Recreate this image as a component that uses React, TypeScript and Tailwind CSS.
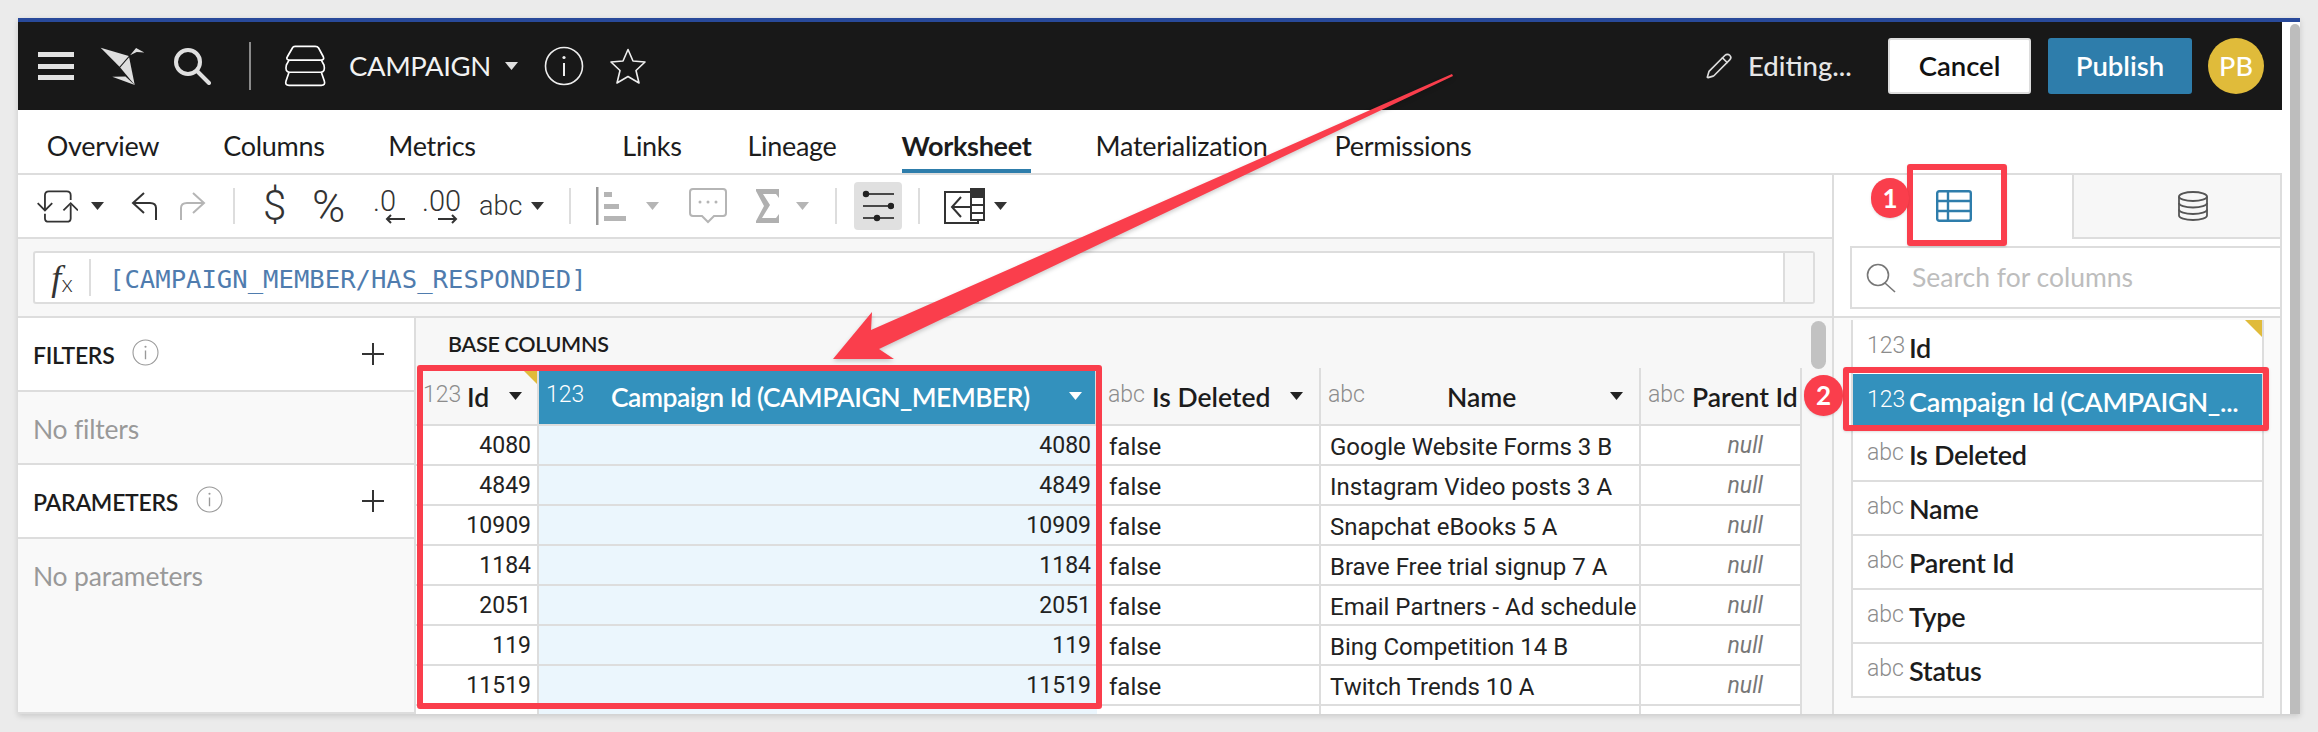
import { Pencil } from 'lucide-react';

const rows = [
  { id: '4080', name: 'Google Website Forms 3 B' },
  { id: '4849', name: 'Instagram Video posts 3 A' },
  { id: '10909', name: 'Snapchat eBooks 5 A' },
  { id: '1184', name: 'Brave Free trial signup 7 A' },
  { id: '2051', name: 'Email Partners - Ad schedule' },
  { id: '119', name: 'Bing Competition 14 B' },
  { id: '11519', name: 'Twitch Trends 10 A' },
  { id: '', name: '' },
];

const tabs = [
  { label: 'Overview', cls: 'ml-[30px] w-[110px]' },
  { label: 'Columns', cls: 'ml-[64px] w-[104px]' },
  { label: 'Metrics', cls: 'ml-[64px] w-[84px]' },
  { label: 'Links', cls: 'ml-[148px] w-[60px]' },
  { label: 'Lineage', cls: 'ml-[65px] w-[90px]' },
  { label: 'Worksheet', cls: 'ml-[65px] w-[129px]', active: true },
  { label: 'Materialization', cls: 'ml-[65px] w-[171px]' },
  { label: 'Permissions', cls: 'ml-[66px] w-[140px]' },
];

const columnList = [
  { type: '123', label: 'Id', cls: 'h-[54px]' },
  { type: '123', label: 'Campaign Id (CAMPAIGN_...', cls: 'h-[54px] bg-[#3391bd] text-white', selected: true },
  { type: 'abc', label: 'Is Deleted', cls: 'h-[54px] border-b-2 border-[#ddd]' },
  { type: 'abc', label: 'Name', cls: 'h-[54px] border-b-2 border-[#ddd]' },
  { type: 'abc', label: 'Parent Id', cls: 'h-[54px] border-b-2 border-[#ddd]' },
  { type: 'abc', label: 'Type', cls: 'h-[54px] border-b-2 border-[#ddd]' },
  { type: 'abc', label: 'Status', cls: 'h-[54px] border-b-2 border-[#ddd]' },
];

function Caret({ className }: { className: string }) {
  return (
    <svg viewBox="0 0 13 8" className={`h-[8px] w-[13px] shrink-0 ${className}`} fill="currentColor">
      <polygon points="0,0 13,0 6.5,8" />
    </svg>
  );
}

function Divider({ className }: { className: string }) {
  return <div className={`h-[36px] w-[2px] shrink-0 bg-[#ddd] ${className}`} />;
}

function Logo() {
  return (
    <svg viewBox="205 30 145 125" className="ml-[24px] h-[42px] w-[48px]" fill="#dedede">
      <polygon points="213,37 298,62 270,95" />
      <polygon points="302,60 320,38 345,52 322,50" />
      <polygon points="299,66 272,97 316,150" />
      <polygon points="248,125 288,124 316,150" />
    </svg>
  );
}

function StackIcon() {
  return (
    <svg viewBox="765 25 125 125" className="ml-[33px] h-[42px] w-[42px]" fill="none" stroke="#fff" strokeWidth="5">
      <path d="M780 70 Q770 68 775 60 L790 34 Q792 29 798 29 H858 Q865 29 868 34 L882 60 Q886 68 876 70 Z" />
      <path d="M780 70 L772 85 Q767 106 782 106 H874 Q889 106 884 85 L876 70" />
      <path d="M780 106 L771 132 Q767 145 780 145 H876 Q889 145 885 132 L876 106" />
    </svg>
  );
}

function InfoIcon({ className, color }: { className: string; color: string }) {
  return (
    <svg viewBox="0 0 40 40" className={className} fill="none" stroke={color}>
      <circle cx="20" cy="20" r="18.5" strokeWidth="1.6" />
      <line x1="20" y1="17" x2="20" y2="30" strokeWidth="2" />
      <circle cx="20" cy="11.5" r="1.6" fill={color} stroke="none" />
    </svg>
  );
}

function TopBar() {
  return (
    <div className="flex h-[88px] items-center bg-[#181818] text-white">
      <div className="ml-[20px] flex h-[28px] w-[36px] flex-col justify-between">
        <div className="h-[5px] bg-[#e2e2e2]" />
        <div className="h-[5px] bg-[#e2e2e2]" />
        <div className="h-[5px] bg-[#e2e2e2]" />
      </div>
      <Logo />
      <svg viewBox="0 0 38 38" className="ml-[27px] h-[38px] w-[38px]" fill="none" stroke="#e0e0e0" strokeWidth="4" strokeLinecap="round">
        <circle cx="15" cy="15" r="12" />
        <line x1="24" y1="24" x2="36" y2="36" />
      </svg>
      <div className="ml-[38px] h-[48px] w-[2px] bg-[#8a8a8a]" />
      <StackIcon />
      <span className="ml-[23px] w-[139px] whitespace-nowrap font-['Lato',sans-serif] text-[27.5px] leading-none tracking-[-0.4px] text-[#f2f2f2]">CAMPAIGN</span>
      <Caret className="ml-[17px] text-[#e0e0e0]" />
      <InfoIcon className="ml-[26px] h-[40px] w-[40px]" color="#eee" />
      <svg viewBox="0 0 36 36" className="ml-[26px] h-[36px] w-[36px]" fill="none" stroke="#eee" strokeWidth="1.6" strokeLinejoin="round">
        <polygon points="18,1.5 23,13 35,14 26,22.5 29,35 18,28.5 7,35 10,22.5 1,14 13,13" />
      </svg>
      <Pencil className="ml-auto text-[#ddd]" size={28} strokeWidth={1.4} />
      <span className="ml-[15px] w-[107px] whitespace-nowrap font-['Lato',sans-serif] text-[27.5px] font-medium text-[#e6e6e6]">Editing...</span>
      <button className="ml-[33px] h-[56px] w-[143px] rounded-[3px] border-2 border-[#ddd] bg-white font-['Lato',sans-serif] text-[27.5px] font-semibold text-[#111]">Cancel</button>
      <button className="ml-[17px] h-[56px] w-[144px] rounded-[3px] bg-[#2e7dab] font-['Lato',sans-serif] text-[27.5px] font-semibold text-white">Publish</button>
      <div className="ml-[16px] mr-[18px] flex h-[56px] w-[56px] items-center justify-center rounded-full bg-[#e0bb3a] font-['Lato',sans-serif] text-[27px] font-medium text-white">PB</div>
    </div>
  );
}

function TabBar() {
  return (
    <div className="flex h-[65px] items-stretch border-b-2 border-[#ddd] font-['Lato',sans-serif] text-[27px] text-[#1c1c1c]">
      {tabs.map((tab) => (
        <div key={tab.label} className={`relative flex items-center justify-center whitespace-nowrap pt-[10px] tracking-[-0.3px] ${tab.cls} ${tab.active ? 'font-bold' : ''}`}>
          {tab.label}
          {tab.active && <div className="absolute bottom-0 left-0 h-[4px] w-full bg-[#2e7dab]" />}
        </div>
      ))}
    </div>
  );
}

function Toolbar() {
  return (
    <div className="flex h-[64px] items-center border-b-2 border-[#ddd] text-[#333]">
      <svg viewBox="0 0 130 100" className="ml-[17px] h-[33px] w-[43px]" fill="none" stroke="#333" strokeWidth="5.5">
        <path d="M30 62 V16 Q30 4 42 4 H96 Q108 4 108 16 V30" />
        <path d="M8 40 L30 62 L52 40" />
        <path d="M108 44 V86 Q108 96 96 96 H42 Q30 96 30 86 V72" />
        <path d="M86 62 L108 40 L130 62" />
      </svg>
      <Caret className="ml-[13px]" />
      <svg viewBox="0 0 26 28" className="ml-[27px] h-[28px] w-[26px]" fill="none" stroke="#333" strokeWidth="2">
        <path d="M13 1 L2 11 L13 21 M2 11 H19 Q25 11 25 16 V28" />
      </svg>
      <svg viewBox="0 0 26 28" className="ml-[23px] h-[28px] w-[26px]" fill="none" stroke="#b5b5b5" strokeWidth="2">
        <path d="M13 1 L24 11 L13 21 M24 11 H7 Q1 11 1 16 V28" />
      </svg>
      <Divider className="ml-[27px]" />
      <span className="ml-[28px] w-[24px] font-['Roboto',sans-serif] text-[42px] font-light leading-none">$</span>
      <span className="ml-[25px] w-[36px] font-['Roboto',sans-serif] text-[45px] font-light leading-none">%</span>
      <div className="ml-[27px] flex w-[30px] flex-col items-start">
        <span className="-ml-[2px] font-['Roboto',sans-serif] text-[29px] font-light leading-[26px]">.0</span>
        <svg viewBox="0 0 20 10" className="ml-[10px] h-[10px] w-[20px]" fill="none" stroke="#333" strokeWidth="2">
          <path d="M20 5 H2 M6 1 L2 5 L6 9" />
        </svg>
      </div>
      <div className="ml-[19px] flex w-[36px] flex-col items-start">
        <span className="-ml-[2px] whitespace-nowrap font-['Roboto',sans-serif] text-[29px] font-light leading-[26px]">.00</span>
        <svg viewBox="0 0 20 10" className="ml-[14px] h-[10px] w-[20px]" fill="none" stroke="#333" strokeWidth="2">
          <path d="M0 5 H18 M14 1 L18 5 L14 9" />
        </svg>
      </div>
      <span className="ml-[19px] w-[46px] font-['Roboto',sans-serif] text-[27px] font-light">abc</span>
      <Caret className="ml-[6px]" />
      <Divider className="ml-[25px]" />
      <svg viewBox="0 0 30 38" className="ml-[25px] h-[38px] w-[30px]" fill="#b5b5b5">
        <rect x="0" y="0" width="2.5" height="38" fill="#999" />
        <rect x="8" y="5" width="8" height="5" />
        <rect x="8" y="17" width="15" height="5" />
        <rect x="8" y="29" width="22" height="5" />
      </svg>
      <Caret className="ml-[20px] text-[#b5b5b5]" />
      <svg viewBox="0 0 38 36" className="ml-[30px] h-[36px] w-[38px]" fill="none" stroke="#b5b5b5" strokeWidth="2">
        <path d="M4 1 H34 Q37 1 37 4 V25 Q37 28 34 28 H25 L19 34 L13 28 H4 Q1 28 1 25 V4 Q1 1 4 1 Z" />
        <circle cx="11" cy="14" r="1.5" fill="#b5b5b5" stroke="none" />
        <circle cx="19" cy="14" r="1.5" fill="#b5b5b5" stroke="none" />
        <circle cx="27" cy="14" r="1.5" fill="#b5b5b5" stroke="none" />
      </svg>
      <svg viewBox="0 0 23 34" className="ml-[29px] h-[34px] w-[23px]" fill="#b0b0b0">
        <polygon points="0,0 23,0 23,9 20,5 7,5 14,16 6,29 20,29 23,25 23,34 0,34 0,32 8,17 0,2" />
      </svg>
      <Caret className="ml-[17px] text-[#b5b5b5]" />
      <Divider className="ml-[26px]" />
      <div className="ml-[17px] flex h-[48px] w-[48px] flex-col items-center justify-center rounded-[4px] bg-[#e0e0e0]">
        <svg viewBox="0 0 32 32" className="h-[32px] w-[32px]" fill="#222" stroke="#222" strokeWidth="1.6">
          <line x1="1" y1="4" x2="32" y2="4" />
          <circle cx="4" cy="4" r="2.4" />
          <line x1="1" y1="16" x2="32" y2="16" />
          <circle cx="29" cy="16" r="2.4" />
          <line x1="1" y1="28" x2="32" y2="28" />
          <circle cx="15" cy="28" r="2.4" />
        </svg>
      </div>
      <Divider className="ml-[16px]" />
      <svg viewBox="0 0 41 36" className="ml-[24px] h-[36px] w-[41px]" fill="none" stroke="#333" strokeWidth="2">
        <rect x="1" y="4" width="33" height="31" />
        <path d="M17 9 L8 19 L17 29 M8 19 H27" />
        <rect x="27" y="1" width="13" height="31" fill="#fff" />
        <rect x="27" y="1" width="13" height="8" fill="#333" />
        <path d="M27 17 H40 M27 25 H40" />
      </svg>
      <Caret className="ml-[9px]" />
    </div>
  );
}

function FormulaBar() {
  return (
    <div className="flex h-[79px] items-start border-b-2 border-[#ddd] bg-[#f7f7f7] pl-[15px] pt-[12px] pr-[17px]">
      <div className="flex h-[53px] flex-1 items-stretch rounded-[3px] border-2 border-[#ddd] bg-white">
        <div className="my-[6px] flex w-[56px] items-center justify-center border-r-2 border-[#ddd] text-[#333]">
          <span className="font-['Liberation_Serif',serif] text-[36px] italic leading-none">f</span>
          <span className="mt-[10px] font-['Lato',sans-serif] text-[24px] font-light leading-none">x</span>
        </div>
        <span className="ml-[18px] self-center pt-[4px] font-['DejaVu_Sans_Mono',monospace] text-[25.6px] text-[#4f7cae]">[CAMPAIGN_MEMBER/HAS_RESPONDED]</span>
        <div className="ml-auto w-[30px] border-l-2 border-[#ddd] bg-[#f7f7f7]" />
      </div>
    </div>
  );
}

function SideSection({ title, infoCls, empty, emptyCls }: { title: string; infoCls: string; empty: string; emptyCls: string }) {
  return (
    <>
      <div className="flex h-[74px] shrink-0 items-center border-b-2 border-[#ddd] bg-white pl-[15px] pr-[30px]">
        <span className="mt-[2px] font-['Lato',sans-serif] text-[23px] font-semibold tracking-[-0.3px] text-[#1c1c1c]">{title}</span>
        <InfoIcon className={`h-[27px] w-[27px] ${infoCls}`} color="#999" />
        <svg viewBox="0 0 22 22" className="ml-auto h-[22px] w-[22px]" stroke="#333" strokeWidth="2">
          <path d="M11 0 V22 M0 11 H22" />
        </svg>
      </div>
      <div className={`flex items-start border-b-2 border-[#ddd] pl-[15px] pt-[18px] font-['Lato',sans-serif] text-[26.5px] tracking-[-0.2px] text-[#999] ${emptyCls}`}>{empty}</div>
    </>
  );
}

function LeftPanel() {
  return (
    <div className="flex w-[398px] shrink-0 flex-col border-r-2 border-[#ddd] bg-[#f9f9f9]">
      <SideSection title="FILTERS" infoCls="ml-[18px] -mt-[3px]" empty="No filters" emptyCls="h-[73px]" />
      <SideSection title="PARAMETERS" infoCls="ml-[18px] -mt-[3px]" empty="No parameters" emptyCls="flex-1 border-b-0" />
    </div>
  );
}

function HeaderCell({ type, label, selected, caret, typeCls, labelCls }: { type: string; label: string; selected?: boolean; caret?: string; typeCls: string; labelCls: string }) {
  return (
    <div className={`relative flex h-[58px] items-center border-b-2 border-r-2 border-[#ddd] ${selected ? 'bg-[#3391bd] text-white' : 'bg-[#f7f7f7] text-[#1c1c1c]'}`}>
      <span className={`-mt-[1px] font-['Roboto',sans-serif] text-[23px] font-light ${selected ? 'text-white' : 'text-[#8c8c8c]'} ${typeCls}`}>{type}</span>
      <span className={`mt-[3px] whitespace-nowrap font-['Lato',sans-serif] text-[26.5px] font-semibold ${labelCls}`}>{label}</span>
      {caret && <Caret className={`-mt-[1px] ${caret}`} />}
    </div>
  );
}

function DataGrid() {
  return (
    <div className="flex flex-1">
      <div className="flex w-[1386px] flex-col overflow-hidden bg-[#f7f7f7]">
        <div className="flex h-[50px] shrink-0 items-center pl-[32px] pt-[2px] font-['Lato',sans-serif] text-[21.5px] font-semibold tracking-[-0.3px] text-[#1c1c1c]">BASE COLUMNS</div>
        <div className="grid grid-cols-[123px_558px_224px_320px_161px] font-['Roboto',sans-serif] text-[23px] text-[#222]">
          <div className="relative">
            <HeaderCell type="123" label="Id" typeCls="ml-[7px] w-[44px]" labelCls="w-[42px]" caret="text-[#222]" />
            <div className="absolute right-[2px] top-0 h-0 w-0 border-l-[16px] border-t-[16px] border-l-transparent border-t-[#e0bb3a]" />
          </div>
          <HeaderCell type="123" label="Campaign Id (CAMPAIGN_MEMBER)" selected typeCls="ml-[7px] w-[65px]" labelCls="w-[458px] tracking-[-0.5px]" caret="text-white" />
          <HeaderCell type="abc" label="Is Deleted" typeCls="ml-[11px] w-[44px]" labelCls="w-[138px]" caret="text-[#222]" />
          <HeaderCell type="abc" label="Name" typeCls="ml-[7px] w-[119px]" labelCls="w-[163px]" caret="text-[#222]" />
          <HeaderCell type="abc" label="Parent Id" typeCls="ml-[7px] w-[44px]" labelCls="" />
          {rows.map((row, i) => (
            <div key={i} className="contents">
              <div className="flex h-[40px] items-center justify-end border-b-2 border-r-2 border-[#ddd] bg-white pr-[6px] pt-[3px]">{row.id}</div>
              <div className="flex h-[40px] items-center justify-end border-b-2 border-[#ddd] bg-[#ebf6fd] pr-[6px] pt-[3px]">{row.id}</div>
              <div className="flex h-[40px] items-center border-b-2 border-r-2 border-[#ddd] bg-white pl-[12px] pt-[3px] text-[24px]">{row.id && 'false'}</div>
              <div className="flex h-[40px] items-center overflow-hidden whitespace-nowrap border-b-2 border-r-2 border-[#ddd] bg-white pl-[9px] pt-[3px] text-[24px]">{row.name}</div>
              <div className="flex h-[40px] items-center justify-end border-b-2 border-r-2 border-[#ddd] bg-white pr-[37px] pt-[3px] italic text-[#777]">{row.id && 'null'}</div>
            </div>
          ))}
        </div>
      </div>
      <div className="flex-1 bg-[#f7f7f7] pl-[9px] pt-[3px]">
        <div className="h-[48px] w-[15px] rounded-full bg-[#c2c2c2]" />
      </div>
    </div>
  );
}

function RightPanel() {
  return (
    <div className="flex w-[448px] shrink-0 flex-col overflow-hidden border-r-2 border-[#ddd] bg-white">
      <div className="flex h-[64px] shrink-0">
        <div className="flex w-[238px] items-center justify-center pb-[2px] pl-[1px]">
          <svg viewBox="0 0 36 32" className="h-[32px] w-[36px]" fill="none" stroke="#2e7dab" strokeWidth="2.4">
            <rect x="1.2" y="1.2" width="33.6" height="29.6" rx="2" />
            <path d="M1 11 H35 M1 21 H35 M12 1 V31" />
          </svg>
        </div>
        <div className="flex flex-1 items-center justify-center border-b-2 border-l-2 border-[#ddd] bg-[#f7f7f7] pl-[32px]">
          <svg viewBox="0 0 30 30" className="h-[30px] w-[30px]" fill="none" stroke="#555" strokeWidth="1.8">
            <ellipse cx="15" cy="5.5" rx="14" ry="4.5" />
            <path d="M1 5.5 V24.5 C1 27 7 29 15 29 C23 29 29 27 29 24.5 V5.5" />
            <path d="M1 12 C1 14.5 7 16.5 15 16.5 C23 16.5 29 14.5 29 12" />
            <path d="M1 18.5 C1 21 7 23 15 23 C23 23 29 21 29 18.5" />
          </svg>
        </div>
      </div>
      <div className="h-[79px] shrink-0 border-b-2 border-[#ddd] pl-[16px] pt-[7px]">
        <div className="flex h-[63px] w-[460px] items-center border-2 border-[#ddd] pl-[14px]">
          <svg viewBox="0 0 30 30" className="h-[30px] w-[30px]" fill="none" stroke="#777" strokeWidth="1.6">
            <circle cx="12" cy="12" r="10.5" />
            <line x1="19" y1="20" x2="29" y2="29" />
          </svg>
          <span className="ml-[16px] whitespace-nowrap font-['Lato',sans-serif] text-[26.5px] text-[#bdbdbd]">Search for columns</span>
        </div>
      </div>
      <div className="flex-1 overflow-hidden bg-[#fafafa] pl-[17px] pr-[16px] pt-[2px]">
        <div className="relative border-x-2 border-[#ddd] bg-white">
          <div className="absolute right-0 top-0 h-0 w-0 border-l-[17px] border-t-[17px] border-l-transparent border-t-[#e0bb3a]" />
          {columnList.map((col) => (
            <div key={col.label} className={`flex items-center pl-[14px] ${col.cls}`}>
              <span className={`-mt-[2px] w-[42px] font-['Roboto',sans-serif] text-[23px] font-light ${col.selected ? 'text-white' : 'text-[#8c8c8c]'}`}>{col.type}</span>
              <span className={`mt-[3px] whitespace-nowrap font-['Lato',sans-serif] text-[27px] font-semibold tracking-[-0.3px] ${col.selected ? 'text-white' : 'text-[#1c1c1c]'}`}>{col.label}</span>
            </div>
          ))}
        </div>
      </div>
    </div>
  );
}

function Annotations() {
  return (
    <>
      <svg viewBox="0 0 2318 732" className="pointer-events-none absolute left-0 top-0 h-[732px] w-[2318px] drop-shadow-[0_2px_2px_rgba(0,0,0,0.2)]">
        <polygon points="1452,74 1453,76 879,349 894,359 833,359 872,312 871,330" fill="#fa3e4c" />
      </svg>
      <div className="pointer-events-none absolute left-[417px] top-[365px] h-[344px] w-[685px] rounded-[3px] border-[6px] border-[#fa3e4c]" />
      <div className="pointer-events-none absolute left-[1907px] top-[164px] h-[82px] w-[100px] rounded-[3px] border-[6px] border-[#fa3e4c] shadow-sm" />
      <div className="pointer-events-none absolute left-[1843px] top-[367px] h-[64px] w-[426px] rounded-[3px] border-[6px] border-[#fa3e4c] shadow-sm" />
      <div className="absolute left-[1871px] top-[178px] flex h-[40px] w-[38px] items-center justify-center rounded-full bg-[#fa3e4c] font-['Lato',sans-serif] text-[26px] font-bold text-white shadow-sm">1</div>
      <div className="absolute left-[1804px] top-[375px] flex h-[41px] w-[39px] items-center justify-center rounded-full bg-[#fa3e4c] font-['Lato',sans-serif] text-[26px] font-bold text-white shadow-sm">2</div>
    </>
  );
}

export default function App() {
  return (
    <div className="relative h-[732px] w-[2318px] overflow-hidden bg-[#ebebeb] pl-[18px] pt-[18px]">
      <div className="flex h-[696px] w-[2282px] flex-col bg-white shadow-[0_2px_6px_rgba(0,0,0,0.15)]">
        <div className="h-[4px] shrink-0 bg-[#28499a]" />
        <div className="flex flex-1 overflow-hidden">
          <div className="flex w-[2264px] shrink-0 flex-col">
            <TopBar />
            <TabBar />
            <div className="flex flex-1 overflow-hidden">
              <div className="flex w-[1816px] shrink-0 flex-col border-r-2 border-[#ddd]">
                <Toolbar />
                <FormulaBar />
                <div className="flex flex-1 overflow-hidden">
                  <LeftPanel />
                  <DataGrid />
                </div>
              </div>
              <RightPanel />
            </div>
          </div>
          <div className="flex-1 pl-[8px]">
            <div className="mt-[2px] h-full rounded-t-[6px] bg-[#bdbdbd]" />
          </div>
        </div>
      </div>
      <Annotations />
    </div>
  );
}
